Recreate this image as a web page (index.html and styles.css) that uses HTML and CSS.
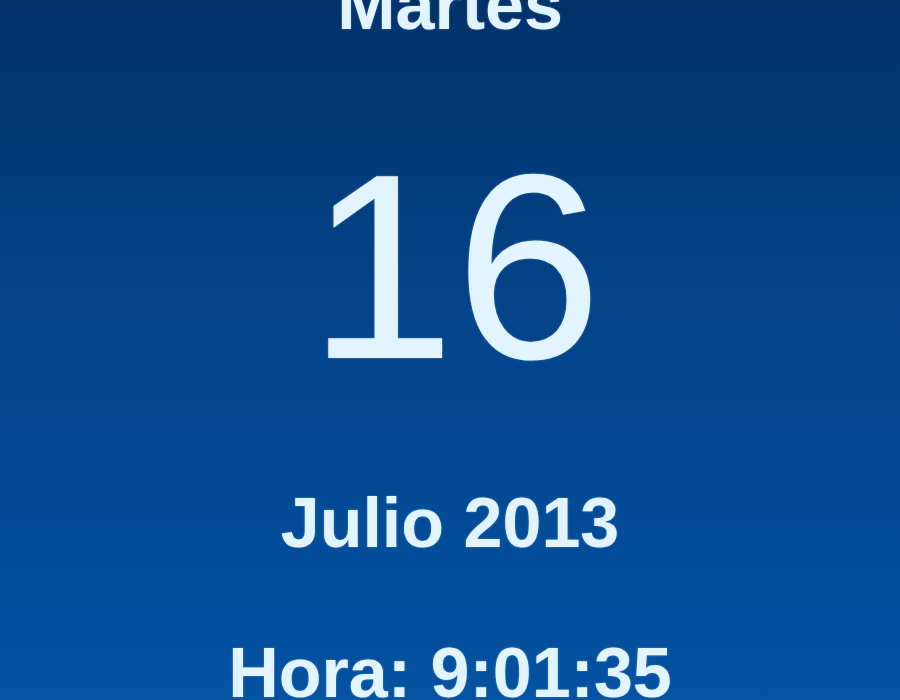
FILE: index.html
```html
<!DOCTYPE html>
<html lang="es">
<head>
  <meta charset="UTF-8" />
  <title>Calendario</title>
  <link rel="stylesheet" href="styles.css">
</head>
<body>
  <div class="calendar">
    <div class="weekday">Martes</div>
    <div class="day">16</div>
    <div class="month">Julio 2013</div>
    <div class="clock">Hora: 9:01:35</div>
  </div>
</body>
</html>
```

FILE: styles.css
```css
* {
  box-sizing: border-box;
}
html, body {
  height: 100%;
}
body {
  margin: 0;
  overflow: hidden;
  font-family: 'Liberation Sans', Arial, sans-serif;
  background: linear-gradient(to bottom, #02326a 0%, #03448a 45%, #0452a2 100%);
  color: #e2f4ff;
}
.calendar {
  display: flex;
  flex-direction: column;
  align-items: center;
  margin-top: -31px;
  text-shadow: 0 0 2px rgba(160, 220, 255, 0.5);
}
.weekday,
.month,
.clock {
  font-size: 70px;
  font-weight: bold;
  line-height: 72px;
}
.day {
  font-size: 264px;
  line-height: 264px;
  margin-top: 94px;
  padding-left: 10px;
}
.month {
  margin-top: 88px;
}
.clock {
  margin-top: 78px;
}
```
